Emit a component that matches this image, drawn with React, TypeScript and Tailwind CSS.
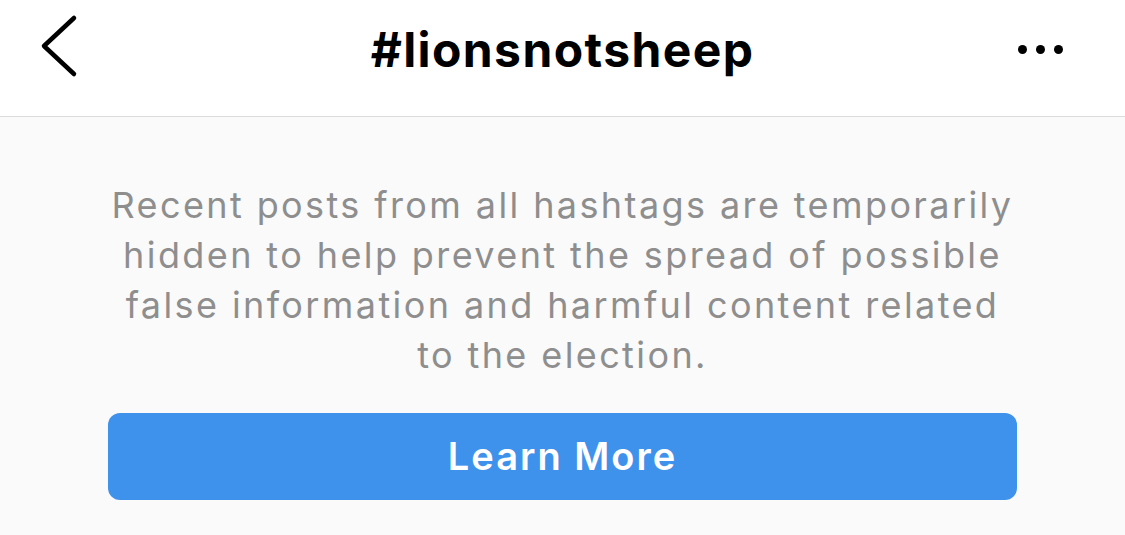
export default function App() {
  return (
    <div className="w-[1125px] h-[535px] bg-[#fafafa] flex flex-col" style={{ fontFamily: 'Inter, "Noto Sans", sans-serif' }}>
      <header className="h-[117px] bg-white border-b border-[#dbdbdb] flex items-start justify-between px-[40px] pt-[14px]">
        <div className="w-[80px] h-[64px] flex items-center">
          <svg width="40" height="64" viewBox="0 0 40 64" fill="none">
            <path d="M34 4 L4 32 L34 60" stroke="#000" strokeWidth="4.5" strokeLinecap="round" strokeLinejoin="round" />
          </svg>
        </div>
        <h1 className="text-[48px] font-bold text-black leading-[64px] tracking-[1.4px] pt-[4px]">#lionsnotsheep</h1>
        <div className="w-[80px] h-[64px] flex items-center justify-end gap-[9px] pr-[22px] pt-[6px]">
          <span className="w-[9px] h-[9px] rounded-full bg-black" />
          <span className="w-[9px] h-[9px] rounded-full bg-black" />
          <span className="w-[9px] h-[9px] rounded-full bg-black" />
        </div>
      </header>
      <main className="flex flex-col items-center pt-[63px]">
        <p className="w-[1000px] text-center text-[36px] leading-[50px] tracking-[2.4px] text-[#8e8e8e]">
          Recent posts from all hashtags are temporarily
          <br />
          hidden to help prevent the spread of possible
          <br />
          false information and harmful content related
          <br />
          to the election.
        </p>
        <button className="mt-[33px] w-[909px] h-[87px] rounded-[12px] bg-[#3f92ec] text-white text-[38px] font-semibold tracking-[2px]">
          Learn More
        </button>
      </main>
    </div>
  )
}
